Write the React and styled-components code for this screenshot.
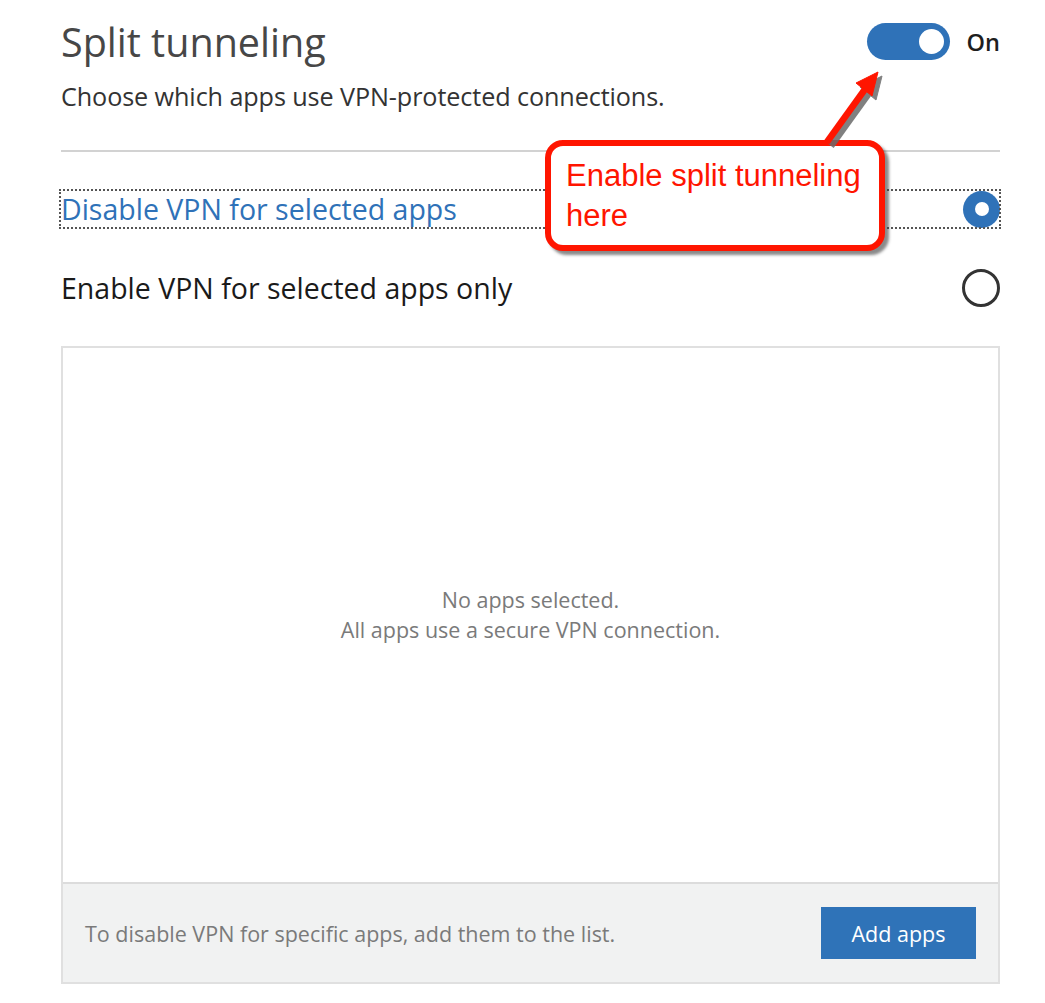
import React from "react";
import styled, { createGlobalStyle } from "styled-components";

const Global = createGlobalStyle`
  html, body { margin: 0; padding: 0; background: #fff; }
  body { font-family: "Open Sans", "Noto Sans", sans-serif; }
`;

const Page = styled.div`
  position: relative;
  width: 1045px;
  height: 1003px;
  box-sizing: border-box;
  padding: 0 45px 0 61px;
`;

const Header = styled.div`
  display: flex;
  justify-content: space-between;
  align-items: flex-start;
  height: 110px;
  padding-top: 15px;
  box-sizing: border-box;
`;

const Titles = styled.div`
  display: flex;
  flex-direction: column;
`;

const Title = styled.h1`
  margin: 0;
  font-family: "Open Sans", sans-serif;
  font-weight: 400;
  font-size: 39.5px;
  line-height: 54px;
  color: #474747;
`;

const Subtitle = styled.p`
  margin: 12px 0 0;
  font-size: 25.2px;
  line-height: 30px;
  color: #333;
  letter-spacing: -0.1px;
`;

const ToggleWrap = styled.div`
  display: flex;
  align-items: center;
  gap: 17px;
  padding-top: 8px;
`;

const Toggle = styled.div`
  width: 83px;
  height: 37px;
  border-radius: 19px;
  background: #2f72b8;
  display: flex;
  align-items: center;
  justify-content: flex-end;
  padding-right: 6px;
  box-sizing: border-box;
`;

const Knob = styled.div`
  width: 25px;
  height: 25px;
  border-radius: 50%;
  background: #fff;
`;

const ToggleLabel = styled.span`
  font-size: 23.5px;
  font-weight: 600;
  color: #1e1e1e;
`;

const Divider = styled.hr`
  margin: 40px 0 0;
  border: 0;
  height: 2px;
  background: #d2d2d2;
`;

const Options = styled.div`
  display: flex;
  flex-direction: column;
  gap: 41px;
  margin-top: 38px;
`;

const Option = styled.div`
  display: flex;
  align-items: center;
  justify-content: space-between;
  height: 38px;
  box-sizing: border-box;
  outline: ${(p) => (p.$focused ? "2px dotted #555" : "none")};
  outline-offset: -1px;
  margin-left: -1px;
`;

const OptionText = styled.span`
  font-size: 28.5px;
  color: ${(p) => (p.$active ? "#2f72b8" : "#1a1a1a")};
  padding-left: 1px;
`;

const Radio = styled.div`
  width: 37px;
  height: 37px;
  border-radius: 50%;
  box-sizing: border-box;
  display: flex;
  align-items: center;
  justify-content: center;
  ${(p) =>
    p.$checked
      ? `background: #2f72b8;`
      : `border: 3px solid #333; width: 38px; height: 38px;`}
`;

const RadioDot = styled.div`
  width: 14px;
  height: 14px;
  border-radius: 50%;
  background: #fff;
`;

const AppBox = styled.div`
  margin-top: 39px;
  height: 638px;
  border: 2px solid #e0e0e0;
  display: flex;
  flex-direction: column;
  box-sizing: border-box;
`;

const EmptyArea = styled.div`
  flex: 1;
  display: flex;
  flex-direction: column;
  align-items: center;
  justify-content: center;
  color: #7a7a7a;
  font-size: 21.5px;
  line-height: 30px;
  text-align: center;
`;

const Footer = styled.div`
  height: 100px;
  background: #f1f2f2;
  border-top: 2px solid #dcdcdc;
  display: flex;
  align-items: center;
  justify-content: space-between;
  padding: 0 22px 0 22px;
  box-sizing: border-box;
`;

const FooterText = styled.span`
  font-size: 21.5px;
  color: #7a7a7a;
`;

const Button = styled.button`
  width: 155px;
  height: 52px;
  border: 0;
  background: #2f73b8;
  color: #fff;
  font-family: "Open Sans", sans-serif;
  font-size: 21.5px;
`;

const Callout = styled.div`
  position: absolute;
  left: 545px;
  top: 140px;
  width: 340px;
  height: 111px;
  box-sizing: border-box;
  border: 6px solid #ff1500;
  border-radius: 18px;
  background: #fff;
  box-shadow: 4px 4px 3px rgba(60, 60, 60, 0.6);
  padding: 10px 0 0 15px;
  font-family: "Liberation Sans", Arial, sans-serif;
  font-size: 31px;
  line-height: 40px;
  color: #ff1500;
  z-index: 2;
`;

const ArrowSvg = styled.svg`
  position: absolute;
  left: 800px;
  top: 60px;
  width: 100px;
  height: 90px;
  z-index: 3;
  overflow: visible;
`;

function Arrow() {
  const body = (
    <>
      <line x1="27" y1="82" x2="68" y2="25" strokeWidth="6.5" strokeLinecap="butt" />
      <polygon points="78,12 56,23 72,36" />
    </>
  );
  return (
    <ArrowSvg viewBox="0 0 100 90">
      <g stroke="#6a6a6a" fill="#6a6a6a" transform="translate(4,4)" opacity="0.85">
        {body}
      </g>
      <g stroke="#ff1500" fill="#ff1500">{body}</g>
    </ArrowSvg>
  );
}

export default function App() {
  return (
    <Page>
      <Global />
      <Header>
        <Titles>
          <Title>Split tunneling</Title>
          <Subtitle>Choose which apps use VPN-protected connections.</Subtitle>
        </Titles>
        <ToggleWrap>
          <Toggle>
            <Knob />
          </Toggle>
          <ToggleLabel>On</ToggleLabel>
        </ToggleWrap>
      </Header>
      <Divider />
      <Options>
        <Option $focused>
          <OptionText $active>Disable VPN for selected apps</OptionText>
          <Radio $checked>
            <RadioDot />
          </Radio>
        </Option>
        <Option>
          <OptionText>Enable VPN for selected apps only</OptionText>
          <Radio />
        </Option>
      </Options>
      <AppBox>
        <EmptyArea>
          <div>No apps selected.</div>
          <div>All apps use a secure VPN connection.</div>
        </EmptyArea>
        <Footer>
          <FooterText>To disable VPN for specific apps, add them to the list.</FooterText>
          <Button>Add apps</Button>
        </Footer>
      </AppBox>
      <Callout>
        Enable split tunneling
        <br />
        here
      </Callout>
      <Arrow />
    </Page>
  );
}
